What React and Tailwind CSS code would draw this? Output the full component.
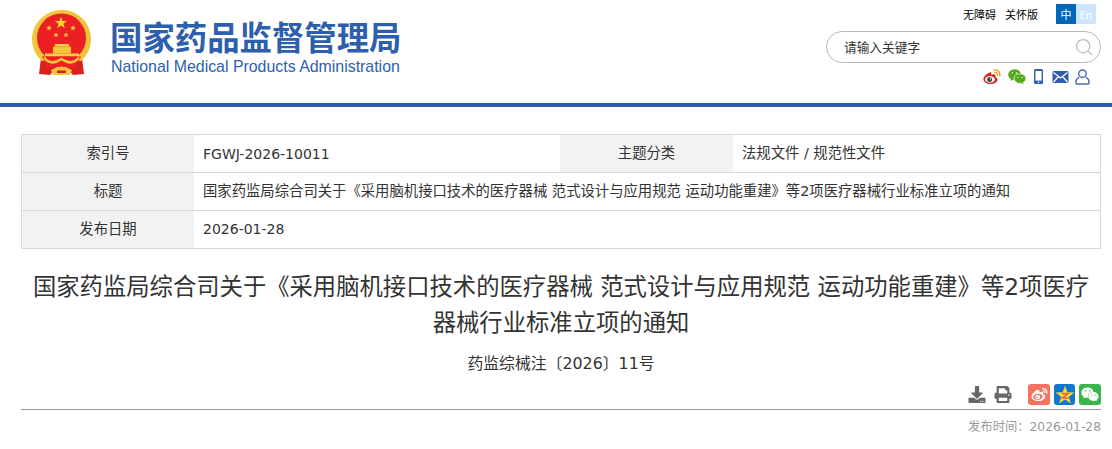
import React from 'react'
import { FaWeibo, FaWeixin, FaDownload, FaPrint } from 'react-icons/fa'
import { FiSearch } from 'react-icons/fi'

const CJK = "font-['DejaVu_Sans','Noto_Sans_CJK_SC',sans-serif] [text-spacing-trim:space-all]"

function Star({ x, y, r, rot = 0 }) {
  const pts = []
  for (let i = 0; i < 10; i++) {
    const rad = i % 2 === 0 ? r : r * 0.4
    const a = (Math.PI / 5) * i - Math.PI / 2 + rot
    pts.push(`${(x + rad * Math.cos(a)).toFixed(2)},${(y + rad * Math.sin(a)).toFixed(2)}`)
  }
  return <polygon points={pts.join(' ')} fill="#fbd438" />
}

// national emblem, simplified
function Emblem() {
  return (
    <svg width="60" height="66" viewBox="0 0 60 66" className="shrink-0">
      <path d="M9 48 L7 64 L18 65 L26 56 Z" fill="#d9221f" />
      <path d="M50 48 L52 64 L41 65 L33 56 Z" fill="#d9221f" />
      <path d="M30 0 C14 0 0 13 0 29 C0 38 4 46 10 51 L49 51 C55 46 59 38 59 29 C59 13 46 0 30 0 Z" fill="#f3c53a" />
      <circle cx="29.5" cy="28" r="24.5" fill="#ec1f24" />
      <Star x={29} y={13} r={6.4} />
      <Star x={17} y={18} r={3} />
      <Star x={41} y={18} r={3} />
      <Star x={24} y={25} r={2.8} />
      <Star x={34} y={25} r={2.8} />
      <rect x="23" y="34" width="14" height="2.5" fill="#f8cf45" />
      <rect x="21" y="36.5" width="18" height="7" fill="#f3c53a" />
      <rect x="13" y="43.5" width="34" height="3" fill="#f8cf45" />
      <path d="M10 46.5 H49 L44 57 H15 Z" fill="#ec1f24" />
      <path d="M12 47.5 C18 55 24 53 29.5 49 C35 53 41 55 47 47.5" fill="none" stroke="#f3c53a" strokeWidth="2.5" />
      <path d="M19 60 Q29.5 53 40 60 L38 65 H21 Z" fill="#f3c53a" />
      <rect x="25" y="60.5" width="9" height="2.5" fill="#d9221f" />
    </svg>
  )
}

function WeiboColor() {
  return (
    <svg width="18" height="15" viewBox="0 0 18 15">
      <path d="M7.5 3.2 C3.5 4.6 0.4 7.6 0.4 10 C0.4 13 4 15 7.5 15 C11.5 15 14.5 12.8 14.5 10.4 C14.5 9 13.2 8.4 12.4 8.2 C13 6.6 12.6 5.4 11 5.2 C10 5.1 8.8 5.6 8.2 5.8 C8.6 4 8.6 2.9 7.5 3.2 Z" fill="#d9251c" />
      <ellipse cx="7" cy="10.4" rx="4.8" ry="3.4" fill="#fff" />
      <circle cx="6.6" cy="10.4" r="2.5" fill="#444" />
      <circle cx="7.4" cy="9.8" r="0.7" fill="#fff" />
      <path d="M11.2 1 C14.6 0.4 17.4 3.2 16.8 6.8" fill="none" stroke="#f2a31d" strokeWidth="1.5" strokeLinecap="round" />
      <path d="M11.6 3.4 C13.4 3.2 14.8 4.6 14.4 6.4" fill="none" stroke="#f2a31d" strokeWidth="1.2" strokeLinecap="round" />
    </svg>
  )
}

function WechatColor() {
  return (
    <svg width="18" height="15" viewBox="0 0 18 15">
      <ellipse cx="6.6" cy="5.6" rx="6.4" ry="5.4" fill="#56a81c" />
      <path d="M3 9 L2.4 12 L6 10 Z" fill="#56a81c" />
      <ellipse cx="12" cy="9.6" rx="6" ry="4.8" fill="#56a81c" stroke="#fff" strokeWidth="0.8" />
      <path d="M14.6 13 L15.6 15 L12.4 14 Z" fill="#56a81c" />
      <circle cx="4.4" cy="4" r="0.8" fill="#fff" />
      <circle cx="8.4" cy="4" r="0.8" fill="#fff" />
      <circle cx="10" cy="8.6" r="0.7" fill="#fff" />
      <circle cx="14" cy="8.6" r="0.7" fill="#fff" />
    </svg>
  )
}

function TopIcons() {
  return (
    <div className="flex items-center pr-[11px] mt-[5px] h-[17px]">
      <WeiboColor />
      <span className="ml-[7px]"><WechatColor /></span>
      <svg width="9" height="15" viewBox="0 0 9 15" className="ml-[8px]">
        <rect width="9" height="15" rx="1.6" fill="#2f5db0" />
        <rect x="1.4" y="2" width="6.2" height="9.6" fill="#fff" />
        <circle cx="4.5" cy="13.2" r="0.8" fill="#fff" />
      </svg>
      <svg width="17" height="12" viewBox="0 0 16 12" className="ml-[9px]">
        <rect width="16" height="12" rx="1.5" fill="#2f5db0" />
        <path d="M1 1.5 L8 7 L15 1.5 M1 11 L6 5.5 M15 11 L10 5.5" stroke="#fff" strokeWidth="1.2" fill="none" />
      </svg>
      <svg width="15" height="16" viewBox="0 0 16 17" fill="none" stroke="#4a68b4" strokeWidth="1.5" className="ml-[6px]">
        <circle cx="8" cy="5" r="4" />
        <path d="M4.5 9 C2 10 1 12 1 14 C1 15.5 2 16 3 16 H13 C14 16 15 15.5 15 14 C15 12 14 10 11.5 9" />
      </svg>
    </div>
  )
}

function Header() {
  return (
    <header className="h-[107px] border-b-4 border-[#2b5bab] flex justify-between">
      <div className="flex items-start pl-[32px] pt-[10px]">
        <Emblem />
        <div className="ml-[18px] pt-[8px]">
          <div className="text-[32.4px] leading-[35px] font-bold text-[#2e5fac] whitespace-nowrap font-['Noto_Sans_CJK_SC',sans-serif]">
            国家药品监督管理局
          </div>
          <div className="text-[15.9px] leading-[18px] mt-[5px] ml-px text-[#2e5fac] whitespace-nowrap font-['Liberation_Sans',sans-serif]">
            National Medical Products Administration
          </div>
        </div>
      </div>
      <div className="w-[286px] mr-[11px] flex flex-col items-end pt-[4px]">
        <div className="flex items-center h-[20px] pr-[5px] text-[11px] text-black font-['Noto_Sans_CJK_SC',sans-serif]">
          <span>无障碍</span>
          <span className="ml-[9px]">关怀版</span>
          <span className="ml-[18px] w-[20px] h-[20px] bg-[#0068b7] text-white flex items-center justify-center">中</span>
          <span className="w-[20px] h-[20px] bg-[#cce6ff] text-white flex items-center justify-center">En</span>
        </div>
        <div className="mt-[7px] w-[275px] h-[32px] rounded-full border border-[#b9b9b9] flex items-center justify-between pl-[17px] pr-[6px]">
          <span className="text-[12.7px] text-[#333] font-['Noto_Sans_CJK_SC',sans-serif]">请输入关键字</span>
          <FiSearch className="w-[20px] h-[20px] text-[#bbb] stroke-[1.5]" />
        </div>
        <TopIcons />
      </div>
    </header>
  )
}

function Label({ children, className = '' }) {
  return (
    <div className={`bg-[#f2f2f2] flex items-center justify-center text-[#333] ${className}`}>{children}</div>
  )
}

function Value({ children, className = '' }) {
  return <div className={`flex items-center pl-[9px] whitespace-nowrap text-[#333] ${className}`}>{children}</div>
}

function InfoTable() {
  return (
    <div className={`mt-[27px] ml-[21px] mr-[11px] border border-[#d8d8d8] text-[14.35px] ${CJK}`}>
      <div className="grid grid-cols-[172px_366px_173px_1fr] h-[38px] border-b border-[#d8d8d8]">
        <Label className="pt-px">索引号</Label>
        <Value className="pt-px text-[14px]">FGWJ-2026-10011</Value>
        <Label className="pt-px">主题分类</Label>
        <Value className="pt-px">法规文件 / 规范性文件</Value>
      </div>
      <div className="grid grid-cols-[172px_1fr] h-[38px] border-b border-[#d8d8d8]">
        <Label className="pt-px">标题</Label>
        <Value className="pt-px">国家药监局综合司关于《采用脑机接口技术的医疗器械 范式设计与应用规范 运动功能重建》等2项医疗器械行业标准立项的通知</Value>
      </div>
      <div className="grid grid-cols-[172px_1fr] h-[37px]">
        <Label>发布日期</Label>
        <Value className="text-[14px]">2026-01-28</Value>
      </div>
    </div>
  )
}

function ShareBar() {
  return (
    <div className="ml-[21px] mr-[11px] mt-[8px] h-[26px] border-b border-[#999] flex justify-end items-start">
      <FaDownload className="w-[18px] h-[17px] mt-[2px] text-[#666]" />
      <FaPrint className="w-[18px] h-[17px] mt-[2px] ml-[8px] text-[#666]" />
      <span className="ml-[16px] w-[22px] h-[21px] rounded-[3px] bg-[#f7715f] flex items-center justify-center">
        <FaWeibo className="w-[17px] h-[16px] text-white" />
      </span>
      <span className="ml-[4px] w-[21px] h-[21px] rounded-[3px] bg-[#1276d0] flex items-center justify-center">
        <svg width="20" height="20" viewBox="0 0 20 20">
          <Star x={10} y={10.5} r={10} />
          <path d="M7 8.5 H13 L7.5 13 H13.5" stroke="#e8632a" strokeWidth="1.5" fill="none" />
        </svg>
      </span>
      <span className="ml-[4px] w-[22px] h-[21px] rounded-[3px] bg-[#3bb54a] flex items-center justify-center">
        <FaWeixin className="w-[18px] h-[17px] text-white" />
      </span>
    </div>
  )
}

export default function App() {
  return (
    <div className="w-[1112px] h-[449px] bg-white overflow-hidden">
      <Header />
      <InfoTable />
      <h1 className={`mt-[20px] ml-[29px] mr-[19px] text-center text-[23.33px] leading-[36px] font-normal text-[#333] ${CJK}`}>
        国家药监局综合司关于《采用脑机接口技术的医疗器械 范式设计与应用规范 运动功能重建》等2项医疗器械行业标准立项的通知
      </h1>
      <div className={`mt-[11px] ml-[21px] mr-[11px] text-center text-[15.85px] leading-[24px] text-[#333] ${CJK}`}>药监综械注〔2026〕11号</div>
      <ShareBar />
      <div className={`ml-[21px] mr-[11px] mt-[7px] text-right text-[12.3px] leading-[20px] text-[#999] ${CJK}`}>发布时间：2026-01-28</div>
    </div>
  )
}
